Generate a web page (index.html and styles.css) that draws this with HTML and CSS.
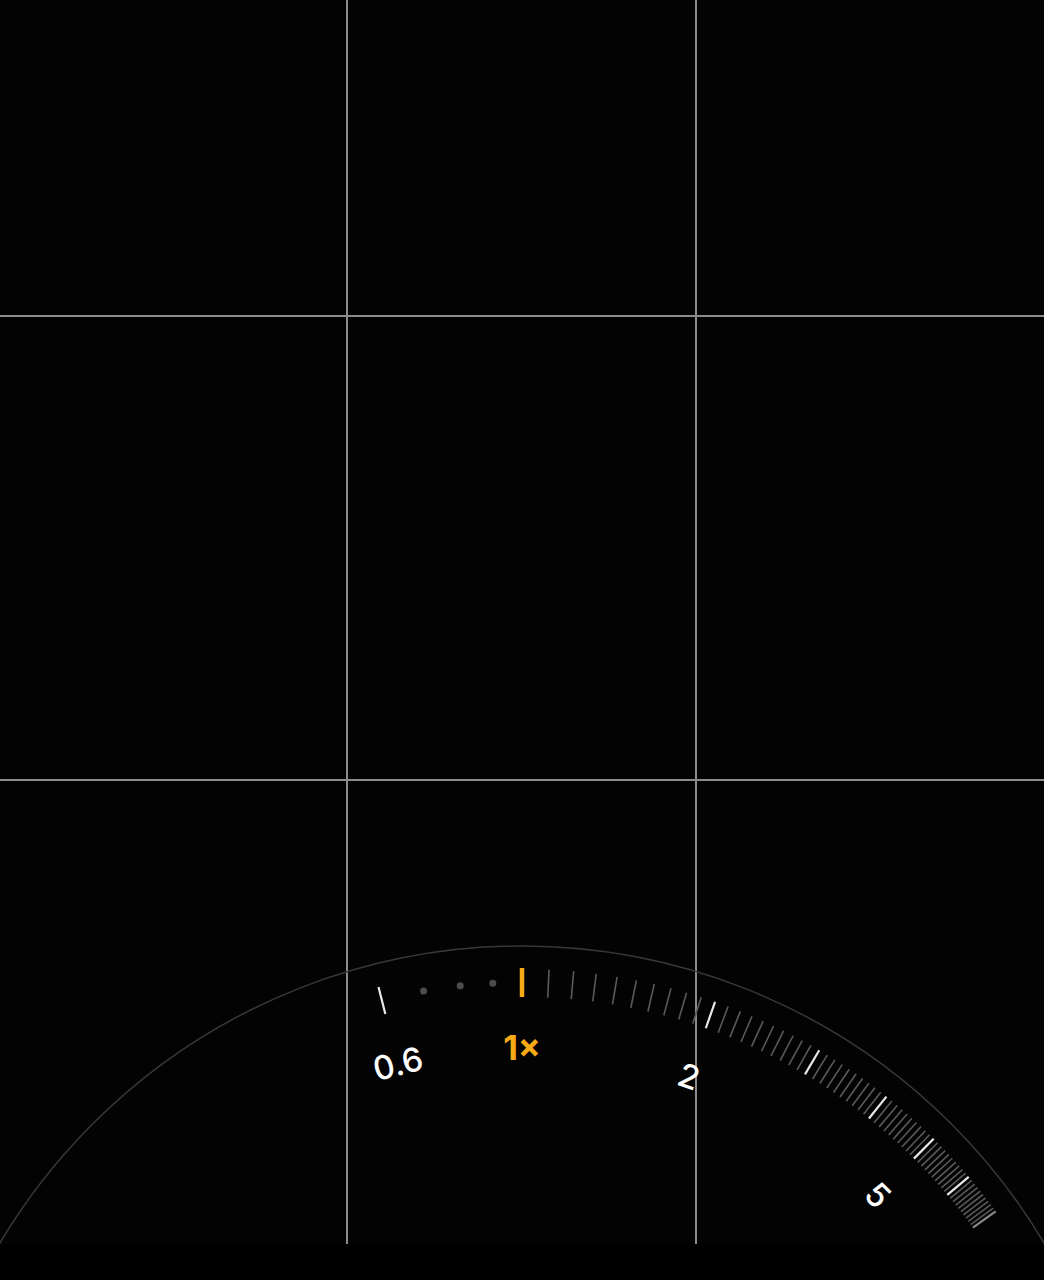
FILE: index.html
```html
<!DOCTYPE html>
<html lang="en">
<head>
<meta charset="utf-8">
<title>Camera zoom dial</title>
<link rel="stylesheet" href="styles.css">
</head>
<body>
<div class="screen">
  <div class="viewfinder">
    <div class="grid">
      <div class="cell"></div><div class="cell"></div><div class="cell"></div>
      <div class="cell"></div><div class="cell"></div><div class="cell"></div>
      <div class="cell"></div><div class="cell"></div><div class="cell"></div>
    </div>
    <svg class="dial" viewBox="0 924 1044 320" width="1044" height="320" xmlns="http://www.w3.org/2000/svg">
      <circle class="dial-rim" cx="522" cy="1553" r="607"></circle>
      <g class="ticks"></g>
      <line class="tick current" x1="522" y1="968" x2="522" y2="997"></line>
      <text class="label" x="522" y="1060" transform="rotate(-14.226 522 1553)">0.6</text>
      <text class="label label-active" x="522" y="1060">1×</text>
      <text class="label" x="522" y="1060" transform="rotate(19.304 522 1553)">2</text>
      <text class="label" x="522" y="1060" transform="rotate(44.823 522 1553)">5</text>
    </svg>
  </div>
</div>
<script src="script.js"></script>
</body>
</html>
```

FILE: styles.css
```css
html, body {
  margin: 0;
  padding: 0;
  background: #000;
}

.screen {
  width: 1044px;
  height: 1280px;
  background: #000;
  overflow: hidden;
}

.viewfinder {
  position: relative;
  height: 1244px;
  overflow: hidden;
  background: #030303;
}

.grid {
  display: grid;
  grid-template-columns: 346px 347px 1fr;
  grid-template-rows: 463px 462px 464px;
  gap: 2px;
  margin-top: -148px;
  background: #8c8c8c;
}

.cell {
  background: #030303;
}

.dial {
  position: absolute;
  left: 0;
  bottom: 0;
  display: block;
}

.dial-rim {
  fill: none;
  stroke: #383838;
  stroke-width: 1.5;
}

.tick {
  stroke-linecap: butt;
}

.tick.minor {
  stroke: #5a5a5a;
  stroke-width: 1.6;
}

.tick.major {
  stroke: #e8e8e8;
  stroke-width: 2.2;
}

.tick.fade {
  stroke: #8a8a8a;
}

.tick.current {
  stroke: #f6aa15;
  stroke-width: 4.5;
}

.dot {
  fill: #4c4c4c;
}

.label {
  font-family: Inter, "Open Sans", "Liberation Sans", sans-serif;
  font-size: 33px;
  font-weight: 500;
  fill: #ffffff;
  text-anchor: middle;
}

.label-active {
  fill: #f6aa15;
  font-size: 34px;
  font-weight: 700;
}
```

FILE: script.js
```js
(function () {
  var NS = 'http://www.w3.org/2000/svg';
  var K = 27.85, CX = 522, CY = 1553;
  var g = document.querySelector('.dial .ticks');

  function angle(z) { return K * Math.log(z); }

  function tick(z, cls) {
    var l = document.createElementNS(NS, 'line');
    l.setAttribute('x1', CX);
    l.setAttribute('x2', CX);
    l.setAttribute('y1', CY - 584);
    l.setAttribute('y2', CY - 556);
    l.setAttribute('class', 'tick ' + cls);
    l.setAttribute('transform', 'rotate(' + angle(z).toFixed(3) + ' ' + CX + ' ' + CY + ')');
    g.appendChild(l);
  }

  function dot(z) {
    var c = document.createElementNS(NS, 'circle');
    c.setAttribute('cx', CX);
    c.setAttribute('cy', CY - 570.5);
    c.setAttribute('r', 3.5);
    c.setAttribute('class', 'dot');
    c.setAttribute('transform', 'rotate(' + angle(z).toFixed(3) + ' ' + CX + ' ' + CY + ')');
    g.appendChild(c);
  }

  tick(0.6, 'major');
  dot(0.7); dot(0.8); dot(0.9);

  for (var i = 11; i <= 70; i++) {
    var z = i / 10;
    if (i === 70) tick(z, 'major fade');
    else if (i % 10 === 0) tick(z, 'major');
    else tick(z, 'minor');
  }
})();
```
